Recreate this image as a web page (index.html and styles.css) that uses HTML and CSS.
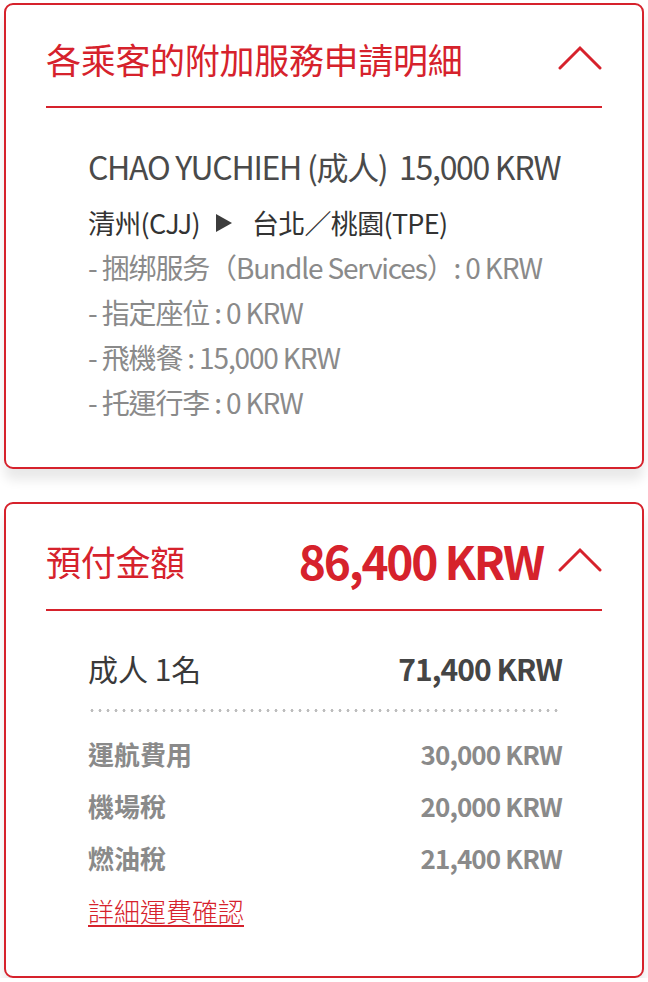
FILE: index.html
```html
<!DOCTYPE html>
<html lang="zh-Hant">
<head>
<meta charset="utf-8">
<link rel="stylesheet" href="styles.css">
</head>
<body>
<div class="page">
  <section class="card card-services">
    <header class="card-head">
      <h2 class="card-title">各乘客的附加服務申請明細</h2>
      <svg class="chevron" viewBox="0 0 44 26" width="44" height="26"><polyline points="2,24 22,4 42,24" fill="none" stroke="#d6222c" stroke-width="3" stroke-linecap="round" stroke-linejoin="miter"/></svg>
    </header>
    <div class="card-body">
      <p class="pax-name">CHAO YUCHIEH (成人)&nbsp; 15,000 KRW</p>
      <p class="route">清州(CJJ)<svg class="route-arrow" viewBox="0 0 16 18" width="16" height="18"><polygon points="0,0 16,9 0,18" fill="#3c3c3c"/></svg>台北／桃園(TPE)</p>
      <ul class="svc-list">
        <li>- 捆绑服务（Bundle Services）: 0 KRW</li>
        <li>- 指定座位 : 0 KRW</li>
        <li>- 飛機餐 : 15,000 KRW</li>
        <li>- 托運行李 : 0 KRW</li>
      </ul>
    </div>
  </section>

  <section class="card card-pay">
    <header class="card-head">
      <h2 class="card-title">預付金額</h2>
      <div class="head-right">
        <span class="total">86,400 KRW</span>
        <svg class="chevron" viewBox="0 0 44 26" width="44" height="26"><polyline points="2,24 22,4 42,24" fill="none" stroke="#d6222c" stroke-width="3" stroke-linecap="round" stroke-linejoin="miter"/></svg>
      </div>
    </header>
    <div class="card-body">
      <div class="sum-row">
        <span>成人 1名</span>
        <span>71,400 KRW</span>
      </div>
      <div class="dots"></div>
      <div class="fee-row"><span>運航費用</span><span>30,000 KRW</span></div>
      <div class="fee-row"><span>機場稅</span><span>20,000 KRW</span></div>
      <div class="fee-row"><span>燃油稅</span><span>21,400 KRW</span></div>
      <a class="detail-link" href="#">詳細運費確認</a>
    </div>
  </section>
</div>
</body>
</html>
```

FILE: styles.css
```css
html, body {
  margin: 0;
  padding: 0;
  background: #ffffff;
}

body {
  font-family: "Noto Sans CJK TC", "Noto Sans", sans-serif;
  color: #444;
}

.page {
  padding: 3px 4px 0 4px;
  display: flex;
  flex-direction: column;
  gap: 33px;
}

.card {
  border: 2px solid #d6222c;
  border-radius: 9px;
  background: #fff;
  box-shadow: 0 11px 12px rgba(0, 0, 0, 0.09);
  padding: 0 40px;
}

.card-head {
  display: flex;
  align-items: center;
  justify-content: space-between;
  border-bottom: 2px solid #d6222c;
  padding-top: 29px;
  padding-bottom: 22px;
}

.card-pay .card-head {
  padding-bottom: 21px;
}

.card-title {
  margin: 0;
  font-size: 35px;
  font-weight: 400;
  line-height: 50px;
  color: #d6222c;
  letter-spacing: -0.3px;
}

.chevron {
  display: block;
  margin-top: -4px;
}

.head-right {
  display: flex;
  align-items: center;
  gap: 15px;
}

.total {
  font-size: 46px;
  font-weight: 700;
  line-height: 55px;
  color: #d6222c;
  letter-spacing: -2.2px;
}

.card-body {
  padding: 38px 40px 42px 42px;
}

.pax-name {
  margin: 0;
  font-size: 32px;
  line-height: 40px;
  color: #4a4a4a;
  letter-spacing: -1.3px;
  white-space: nowrap;
}

.route {
  margin: 14px 0 0 0;
  font-size: 27px;
  line-height: 45px;
  color: #333;
  display: flex;
  align-items: center;
  letter-spacing: -0.7px;
}

.route-arrow {
  margin: 0 20px 0 16px;
}

.svc-list {
  list-style: none;
  margin: 0;
  padding: 0;
}

.svc-list li {
  font-size: 28px;
  line-height: 45px;
  color: #8a8a8a;
  letter-spacing: -1.15px;
  white-space: nowrap;
}

.card-pay .card-body {
  padding-top: 37px;
  padding-bottom: 49px;
}

.sum-row {
  display: flex;
  justify-content: space-between;
  font-size: 30px;
  line-height: 40px;
  color: #3a3a3a;
}

.sum-row span:last-child {
  font-weight: 700;
  color: #454545;
  letter-spacing: -1px;
}

.dots {
  height: 3px;
  margin: 21px 0 16px 0;
  background-image: radial-gradient(circle, #bdbdbd 1.3px, transparent 1.7px);
  background-size: 8px 3px;
  background-repeat: repeat-x;
  background-position: 0 0;
}

.fee-row {
  display: flex;
  justify-content: space-between;
  font-size: 26px;
  line-height: 52px;
  color: #8a8a8a;
  font-weight: 700;
}

.fee-row span:last-child {
  letter-spacing: -0.9px;
}

.detail-link {
  display: inline-block;
  margin-top: 14px;
  font-size: 26px;
  line-height: 26px;
  font-weight: 300;
  color: #d6222c;
  text-decoration: none;
  border-bottom: 2px solid #d6222c;
  padding-bottom: 1px;
}
```
